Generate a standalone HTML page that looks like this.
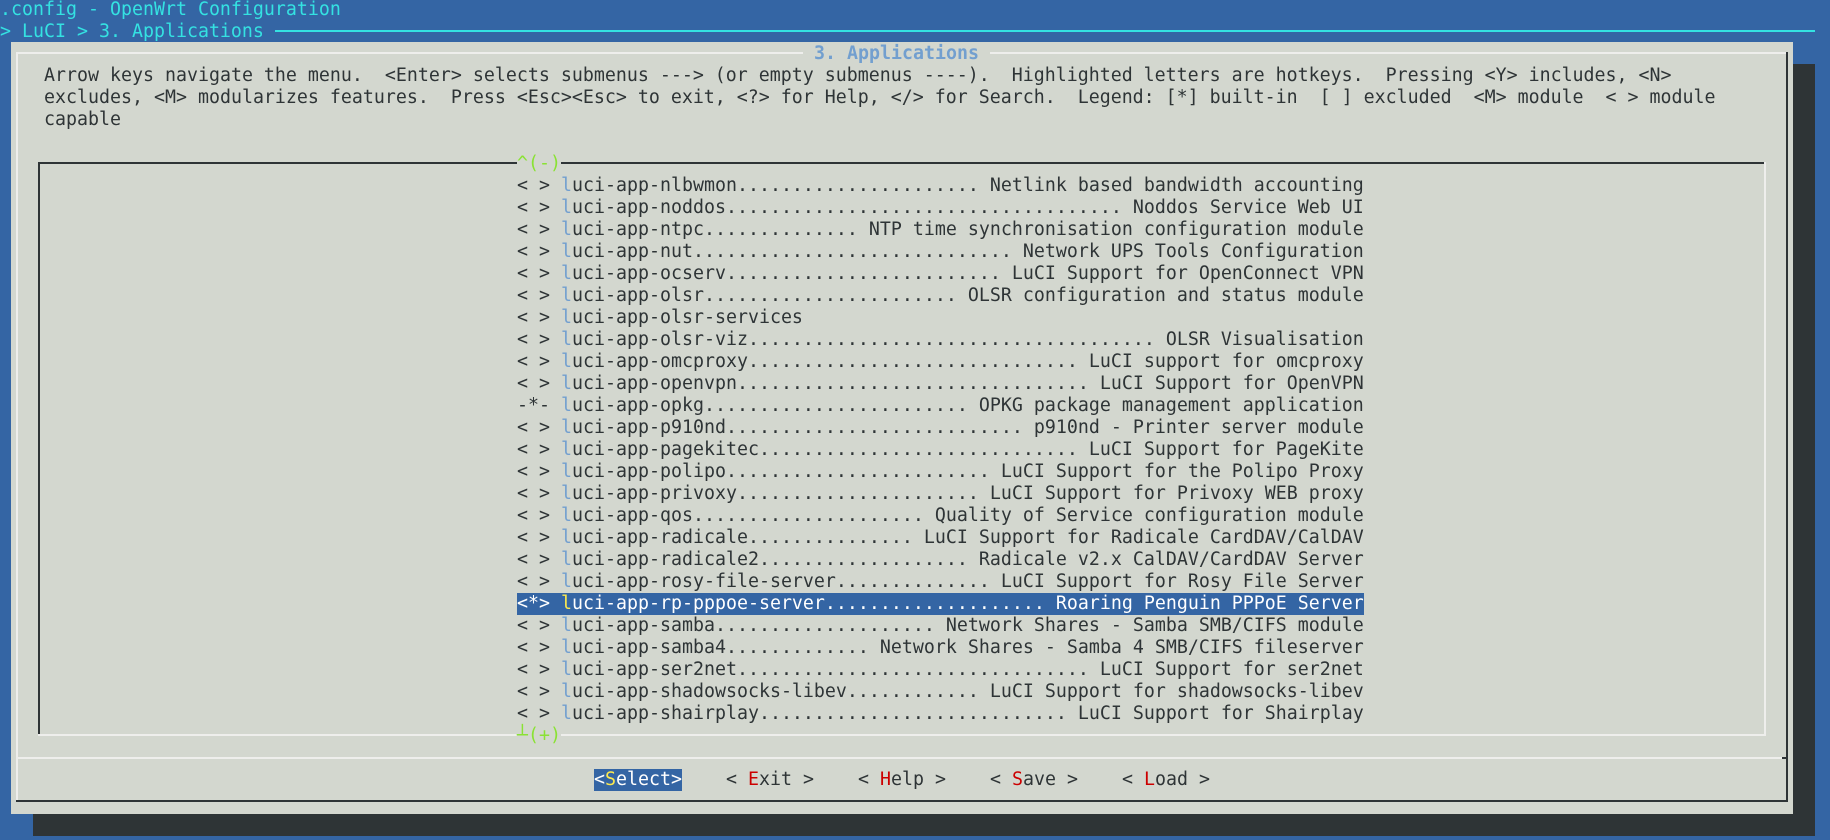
<!DOCTYPE html>
<html><head><meta charset="utf-8"><style>
*{margin:0;padding:0;box-sizing:border-box}
html,body{width:1830px;height:840px;overflow:hidden;background:#3465a4}
body{position:relative;font-family:"DejaVu Sans Mono","Liberation Mono",monospace;font-size:18.27px;color:#2e3436}
.r{position:absolute;height:22px;line-height:22px;white-space:pre;margin-top:1px}
.b{position:absolute}
.c{color:#34e2e2}
.k{color:#729fcf}
.g{color:#8ae234}
.red{color:#cc0000}
.sel{background:#3465a4;color:#fff}
.y{color:#fce94f}
</style></head><body>
<div class="r c" style="left:0;top:-2px">.config - OpenWrt Configuration</div>
<div class="r c" style="left:0;top:20px">&gt; LuCI &gt; 3. Applications</div>
<div class="b" style="left:275px;top:30px;width:1540px;height:2px;background:#34e2e2"></div>
<div class="b" style="left:33px;top:64px;width:1782px;height:772px;background:#2e3436"></div>
<div class="b" style="left:11px;top:42px;width:1782px;height:772px;background:#d3d7cf"></div>
<div class="b" style="left:16px;top:52px;width:1772px;height:2px;background:#eeeeec"></div>
<div class="b" style="left:16px;top:52px;width:2px;height:749px;background:#eeeeec"></div>
<div class="b" style="left:1786px;top:52px;width:2px;height:750px;background:#2e3436"></div>
<div class="b" style="left:16px;top:800px;width:1772px;height:2px;background:#2e3436"></div>
<div class="b" style="left:16px;top:757px;width:1772px;height:2px;background:#eeeeec"></div>
<div class="b" style="left:1782px;top:757px;width:6px;height:2px;background:#2e3436"></div>
<div class="r k" style="left:803px;top:42px;background:#d3d7cf;font-weight:bold"> 3. Applications </div>
<div class="r" style="left:44px;top:64px">Arrow keys navigate the menu.  &lt;Enter&gt; selects submenus ---&gt; (or empty submenus ----).  Highlighted letters are hotkeys.  Pressing &lt;Y&gt; includes, &lt;N&gt;</div>
<div class="r" style="left:44px;top:86px">excludes, &lt;M&gt; modularizes features.  Press &lt;Esc&gt;&lt;Esc&gt; to exit, &lt;?&gt; for Help, &lt;/&gt; for Search.  Legend: [*] built-in  [ ] excluded  &lt;M&gt; module  &lt; &gt; module</div>
<div class="r" style="left:44px;top:108px">capable</div>
<div class="b" style="left:38px;top:162px;width:1728px;height:2px;background:#2e3436"></div>
<div class="b" style="left:38px;top:162px;width:2px;height:573px;background:#2e3436"></div>
<div class="b" style="left:1764px;top:162px;width:2px;height:574px;background:#eeeeec"></div>
<div class="b" style="left:38px;top:734px;width:1728px;height:2px;background:#eeeeec"></div>
<div class="r g" style="left:517px;top:152px;background:#d3d7cf">^(-)</div>
<div class="r g" style="left:517px;top:724px;background:#d3d7cf">┴(+)</div>
<div class="r" style="left:517px;top:174px">&lt; &gt; <span class="k">l</span>uci-app-nlbwmon...................... Netlink based bandwidth accounting</div>
<div class="r" style="left:517px;top:196px">&lt; &gt; <span class="k">l</span>uci-app-noddos.................................... Noddos Service Web UI</div>
<div class="r" style="left:517px;top:218px">&lt; &gt; <span class="k">l</span>uci-app-ntpc.............. NTP time synchronisation configuration module</div>
<div class="r" style="left:517px;top:240px">&lt; &gt; <span class="k">l</span>uci-app-nut............................. Network UPS Tools Configuration</div>
<div class="r" style="left:517px;top:262px">&lt; &gt; <span class="k">l</span>uci-app-ocserv......................... LuCI Support for OpenConnect VPN</div>
<div class="r" style="left:517px;top:284px">&lt; &gt; <span class="k">l</span>uci-app-olsr....................... OLSR configuration and status module</div>
<div class="r" style="left:517px;top:306px">&lt; &gt; <span class="k">l</span>uci-app-olsr-services</div>
<div class="r" style="left:517px;top:328px">&lt; &gt; <span class="k">l</span>uci-app-olsr-viz..................................... OLSR Visualisation</div>
<div class="r" style="left:517px;top:350px">&lt; &gt; <span class="k">l</span>uci-app-omcproxy.............................. LuCI support for omcproxy</div>
<div class="r" style="left:517px;top:372px">&lt; &gt; <span class="k">l</span>uci-app-openvpn................................ LuCI Support for OpenVPN</div>
<div class="r" style="left:517px;top:394px">-*- <span class="k">l</span>uci-app-opkg........................ OPKG package management application</div>
<div class="r" style="left:517px;top:416px">&lt; &gt; <span class="k">l</span>uci-app-p910nd........................... p910nd - Printer server module</div>
<div class="r" style="left:517px;top:438px">&lt; &gt; <span class="k">l</span>uci-app-pagekitec............................. LuCI Support for PageKite</div>
<div class="r" style="left:517px;top:460px">&lt; &gt; <span class="k">l</span>uci-app-polipo........................ LuCI Support for the Polipo Proxy</div>
<div class="r" style="left:517px;top:482px">&lt; &gt; <span class="k">l</span>uci-app-privoxy...................... LuCI Support for Privoxy WEB proxy</div>
<div class="r" style="left:517px;top:504px">&lt; &gt; <span class="k">l</span>uci-app-qos..................... Quality of Service configuration module</div>
<div class="r" style="left:517px;top:526px">&lt; &gt; <span class="k">l</span>uci-app-radicale............... LuCI Support for Radicale CardDAV/CalDAV</div>
<div class="r" style="left:517px;top:548px">&lt; &gt; <span class="k">l</span>uci-app-radicale2................... Radicale v2.x CalDAV/CardDAV Server</div>
<div class="r" style="left:517px;top:570px">&lt; &gt; <span class="k">l</span>uci-app-rosy-file-server.............. LuCI Support for Rosy File Server</div>
<div class="r sel" style="left:517px;top:592px">&lt;*&gt; <span class="y">l</span>uci-app-rp-pppoe-server.................... Roaring Penguin PPPoE Server</div>
<div class="r" style="left:517px;top:614px">&lt; &gt; <span class="k">l</span>uci-app-samba.................... Network Shares - Samba SMB/CIFS module</div>
<div class="r" style="left:517px;top:636px">&lt; &gt; <span class="k">l</span>uci-app-samba4............. Network Shares - Samba 4 SMB/CIFS fileserver</div>
<div class="r" style="left:517px;top:658px">&lt; &gt; <span class="k">l</span>uci-app-ser2net................................ LuCI Support for ser2net</div>
<div class="r" style="left:517px;top:680px">&lt; &gt; <span class="k">l</span>uci-app-shadowsocks-libev............ LuCI Support for shadowsocks-libev</div>
<div class="r" style="left:517px;top:702px">&lt; &gt; <span class="k">l</span>uci-app-shairplay............................ LuCI Support for Shairplay</div>
<div class="r sel" style="left:594px;top:768px">&lt;<span class="y">S</span>elect&gt;</div>
<div class="r" style="left:726px;top:768px">&lt; <span class="red">E</span>xit &gt;</div>
<div class="r" style="left:858px;top:768px">&lt; <span class="red">H</span>elp &gt;</div>
<div class="r" style="left:990px;top:768px">&lt; <span class="red">S</span>ave &gt;</div>
<div class="r" style="left:1122px;top:768px">&lt; <span class="red">L</span>oad &gt;</div>
</body></html>
